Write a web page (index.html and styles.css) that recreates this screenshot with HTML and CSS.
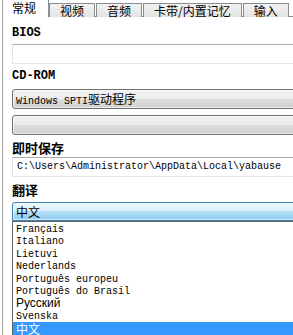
FILE: index.html
```html
<!DOCTYPE html>
<html lang="zh">
<head>
    <meta charset="UTF-8">
    <title>设置</title>
    <link rel="stylesheet" href="styles.css">
</head>
<body>
    <div class="window">
        <div class="tabs">
            <div class="tab active">常规</div>
            <div class="tab">视频</div>
            <div class="tab">音频</div>
            <div class="tab">卡带/内置记忆</div>
            <div class="tab">输入</div>
        </div>

        <div class="panel">
            <div class="label label-latin">BIOS</div>
            <div class="textbox"></div>

            <div class="label label-latin label-cd">CD-ROM</div>
            <div class="combo">Windows SPTI<span class="cjk">驱动程序</span></div>
            <div class="combo combo-empty"></div>

            <div class="label label-cjk">即时保存</div>
            <div class="textbox">C:\Users\Administrator\AppData\Local\yabause</div>

            <div class="label label-cjk label-lang">翻译</div>
            <div class="combo combo-focus"><span class="cjk">中文</span></div>
            <ul class="droplist">
                <li>Français</li>
                <li>Italiano</li>
                <li>Lietuvi</li>
                <li>Nederlands</li>
                <li>Português europeu</li>
                <li>Português do Brasil</li>
                <li class="sans">Русский</li>
                <li>Svenska</li>
                <li class="selected"><span class="cjk">中文</span></li>
            </ul>
        </div>
    </div>
</body>
</html>
```

FILE: styles.css
```css
* {
    box-sizing: border-box;
    margin: 0;
    padding: 0;
}

html, body {
    width: 293px;
    height: 335px;
    overflow: hidden;
    background: #fff;
}

body {
    font-family: "Liberation Mono", "Noto Sans CJK SC", monospace;
    font-size: 10px;
    color: #000;
}

.window {
    width: 340px;
    margin-left: 2px;
}

/* tab strip */
.tabs {
    display: flex;
    align-items: flex-end;
    height: 17px;
}

.tab {
    font-family: "Noto Sans CJK SC", sans-serif;
    font-size: 12px;
    line-height: 13px;
    height: 14px;
    padding: 0 10px;
    margin-left: 1px;
    border: 1px solid #898c95;
    border-bottom: none;
    background: linear-gradient(#f3f3f3, #e3e3e3);
    color: #000;
    white-space: nowrap;
}

.tab.active {
    height: 17px;
    line-height: 15px;
    margin-left: 0;
    padding: 0 12px 0 9px;
    border-left: 1px solid #a0a0a0;
    border-right: 1px solid #898c95;
    border-top: none;
    background: #fff;
    position: relative;
    z-index: 1;
}

.tab.active + .tab {
    margin-left: 0;
}

.panel {
    display: flex;
    flex-direction: column;
    border-left: 1px solid #a0a0a0;
    border-top: 1px solid #898c95;
    margin-top: -1px;
    padding-left: 9px;
    height: 330px;
}

.label {
    font-weight: bold;
}

.label-latin {
    font-size: 12px;
    line-height: 12px;
    margin-top: 10px;
    margin-bottom: 5px;
}

.label-cd {
    margin-top: 6px;
    margin-bottom: 7px;
}

.label-cjk {
    font-family: "Noto Sans CJK SC", sans-serif;
    font-size: 13px;
    line-height: 14px;
    margin-top: 6px;
    margin-bottom: 2px;
}

.label-lang {
    margin-top: 6px;
    margin-bottom: 5px;
}

.cjk {
    font-family: "Noto Sans CJK SC", sans-serif;
    font-size: 12px;
}

.textbox {
    height: 20px;
    line-height: 18px;
    padding-left: 4px;
    border: 1px solid #e2e3ea;
    border-top-color: #abadb3;
    border-bottom-color: #e3e9ef;
    background: #fff;
    white-space: nowrap;
}

.combo {
    height: 20px;
    line-height: 18px;
    padding-left: 3px;
    border: 1px solid #707070;
    border-radius: 3px;
    background: linear-gradient(#f2f2f2 0%, #ebebeb 50%, #dddddd 50%, #cfcfcf 100%);
    box-shadow: inset 0 0 0 1px rgba(255, 255, 255, 0.6);
    white-space: nowrap;
}

.combo-empty {
    margin-top: 6px;
}

.combo-focus {
    height: 19px;
    border-color: #3c7fb1;
    border-radius: 3px 3px 0 0;
    background: linear-gradient(#eaf6fd 0%, #d9f0fc 50%, #b6e0f9 50%, #8ccaee 100%);
}

.droplist {
    list-style: none;
    border-left: 1px solid #646464;
    border-top: 1px solid #646464;
    padding-top: 1px;
    background: #fff;
}

.droplist li {
    height: 12.4px;
    line-height: 13px;
    padding-left: 3px;
    white-space: nowrap;
}

.droplist li.sans {
    font-family: "Liberation Sans", sans-serif;
    font-size: 12px;
}

.droplist li.selected {
    background: #3399ff;
    color: #fff;
    height: 14px;
}
```
